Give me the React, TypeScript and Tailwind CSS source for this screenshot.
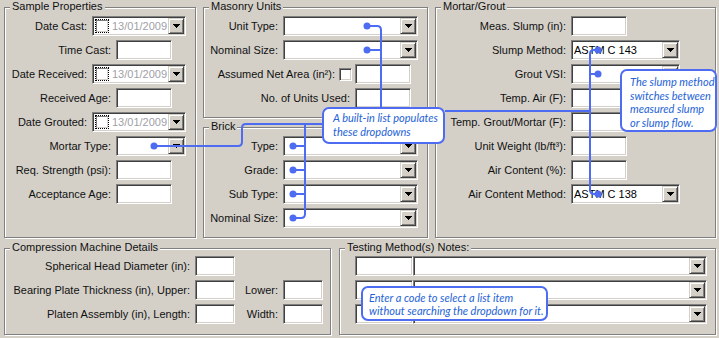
import React from 'react'

const sunken =
  'bg-white border border-t-[#808080] border-l-[#808080] border-r-white border-b-white shadow-[inset_1px_1px_0_#404040,inset_-1px_-1px_0_#d4d0c8]'

function Arrow() {
  return (
    <svg width="7" height="4" viewBox="0 0 7 4" shapeRendering="crispEdges">
      <path d="M0 0h7v1h-1v1h-1v1h-1v1h-1v-1h-1v-1h-1v-1h-1z" fill="#000" />
    </svg>
  )
}

function DropBtn() {
  return (
    <div className="w-4 h-4 shrink-0 flex items-center justify-center bg-[#d4d0c8] border border-t-[#d4d0c8] border-l-[#d4d0c8] border-r-[#404040] border-b-[#404040] shadow-[inset_1px_1px_0_#fff,inset_-1px_-1px_0_#808080]">
      <Arrow />
    </div>
  )
}

function TextBox({ w, disabled }: { w: string; disabled?: boolean }) {
  return <div className={`${sunken} ${w} h-5 shrink-0 ${disabled ? 'bg-[#d4d0c8]' : ''}`} />
}

function Combo({ w, text }: { w: string; text?: string }) {
  return (
    <div className={`${sunken} ${w} h-5 shrink-0 p-px flex items-center`}>
      <span className="flex-1 pl-[1px] text-[11px] text-black whitespace-nowrap">{text}</span>
      <DropBtn />
    </div>
  )
}

function DatePick() {
  return (
    <div className={`${sunken} w-[94px] h-5 shrink-0 p-px flex items-center`}>
      <span className="ml-px w-[14px] h-[14px] border border-dotted border-black flex items-center justify-center">
        <span className="w-[12px] h-[12px] bg-white border border-t-[#808080] border-l-[#808080] border-r-[#d4d0c8] border-b-[#d4d0c8]" />
      </span>
      <span className="ml-[3px] flex-1 text-[#a0a0a8]">13/01/2009</span>
      <DropBtn />
    </div>
  )
}

function Group({ title, className, children }: { title: string; className: string; children?: React.ReactNode }) {
  return (
    <div className={`relative border border-[#808080] shadow-[1px_1px_0_#fff,inset_1px_1px_0_#fff] ${className}`}>
      <span className="absolute -top-2 left-[5px] px-[2px] bg-[#d4d0c8] leading-[13px] whitespace-nowrap">{title}</span>
      {children}
    </div>
  )
}

function Row({ label, lw, children }: { label: string; lw: string; children?: React.ReactNode }) {
  return (
    <div className="flex items-center h-5">
      <span className={`${lw} shrink-0 text-right pr-[5px] whitespace-nowrap`}>{label}</span>
      {children}
    </div>
  )
}

export default function App() {
  const blue = '#4d6cf2'
  return (
    <div className="relative w-[719px] h-[338px] overflow-hidden bg-[#d4d0c8] text-[11px] leading-[13px] text-[#111] font-['Liberation_Sans',Arial,sans-serif]">
      <div className="flex flex-col pt-[7px] pl-[4px]">
        <div className="flex gap-[7px]">
          <Group title="Sample Properties" className="w-[192px] h-[231px] pt-[8px]">
            <div className="flex flex-col gap-1">
              <Row label="Date Cast:" lw="w-[87px]"><DatePick /></Row>
              <Row label="Time Cast:" lw="w-[111px]"><TextBox w="w-[56px]" /></Row>
              <Row label="Date Received:" lw="w-[87px]"><DatePick /></Row>
              <Row label="Received Age:" lw="w-[111px]"><TextBox w="w-[56px]" /></Row>
              <Row label="Date Grouted:" lw="w-[87px]"><DatePick /></Row>
              <Row label="Mortar Type:" lw="w-[111px]"><Combo w="w-[70px]" /></Row>
              <Row label="Req. Strength (psi):" lw="w-[111px]"><TextBox w="w-[56px]" /></Row>
              <Row label="Acceptance Age:" lw="w-[111px]"><TextBox w="w-[56px]" /></Row>
            </div>
          </Group>

          <div className="flex flex-col gap-[9px] w-[225px]">
            <Group title="Masonry Units" className="h-[111px] pt-[8px]">
              <div className="flex flex-col gap-1">
                <Row label="Unit Type:" lw="w-[79px]"><Combo w="w-[135px]" /></Row>
                <Row label="Nominal Size:" lw="w-[79px]"><Combo w="w-[135px]" /></Row>
                <div className="flex items-center h-5">
                  <span className="w-[135px] shrink-0 text-right pr-[4px] whitespace-nowrap">Assumed Net Area (in²):</span>
                  <span className={`${sunken} w-[13px] h-[13px] shrink-0`} />
                  <span className="w-[3px]" />
                  <TextBox w="w-[56px]" disabled />
                </div>
                <Row label="No. of Units Used:" lw="w-[151px]"><TextBox w="w-[56px]" /></Row>
              </div>
            </Group>
            <Group title="Brick" className="h-[111px] pt-[8px]">
              <div className="flex flex-col gap-1">
                <Row label="Type:" lw="w-[79px]"><Combo w="w-[135px]" /></Row>
                <Row label="Grade:" lw="w-[79px]"><Combo w="w-[135px]" /></Row>
                <Row label="Sub Type:" lw="w-[79px]"><Combo w="w-[135px]" /></Row>
                <Row label="Nominal Size:" lw="w-[79px]"><Combo w="w-[135px]" /></Row>
              </div>
            </Group>
          </div>

          <Group title="Mortar/Grout" className="w-[281px] h-[231px] pt-[8px]">
            <div className="flex flex-col gap-1">
              <Row label="Meas. Slump (in):" lw="w-[135px]"><TextBox w="w-[56px]" /></Row>
              <Row label="Slump Method:" lw="w-[135px]"><Combo w="w-[109px]" text="ASTM C 143" /></Row>
              <Row label="Grout VSI:" lw="w-[135px]"><Combo w="w-[109px]" /></Row>
              <Row label="Temp. Air (F):" lw="w-[135px]"><TextBox w="w-[56px]" /></Row>
              <Row label="Temp. Grout/Mortar (F):" lw="w-[135px]"><TextBox w="w-[56px]" /></Row>
              <Row label="Unit Weight (lb/ft³):" lw="w-[135px]"><TextBox w="w-[56px]" /></Row>
              <Row label="Air Content (%):" lw="w-[135px]"><TextBox w="w-[56px]" /></Row>
              <Row label="Air Content Method:" lw="w-[135px]"><Combo w="w-[109px]" text="ASTM C 138" /></Row>
            </div>
          </Group>
        </div>

        <div className="flex gap-[8px] mt-[10px]">
          <Group title="Compression Machine Details" className="w-[327px] h-[87px] pt-[7px]">
            <div className="flex flex-col gap-1">
              <Row label="Spherical Head Diameter (in):" lw="w-[190px]"><TextBox w="w-[40px]" /></Row>
              <Row label="Bearing Plate Thickness (in), Upper:" lw="w-[190px]">
                <TextBox w="w-[40px]" />
                <span className="w-[48px] shrink-0 text-right pr-[5px]">Lower:</span>
                <TextBox w="w-[40px]" />
              </Row>
              <Row label="Platen Assembly (in), Length:" lw="w-[190px]">
                <TextBox w="w-[40px]" />
                <span className="w-[48px] shrink-0 text-right pr-[5px]">Width:</span>
                <TextBox w="w-[40px]" />
              </Row>
            </div>
          </Group>
          <Group title="Testing Method(s) Notes:" className="w-[377px] h-[87px] pt-[7px]">
            <div className="flex flex-col gap-1 pl-[15px]">
              {[0, 1, 2].map(i => (
                <div key={i} className="flex h-5">
                  <TextBox w="w-[58px]" />
                  <Combo w="w-[294px]" />
                </div>
              ))}
            </div>
          </Group>
        </div>
      </div>

      <svg className="absolute inset-0 pointer-events-none" width="719" height="338" viewBox="0 0 719 338">
        <g fill="none" stroke={blue} strokeWidth="2">
          <path d="M367 26H377Q381 26 381 30V107" />
          <path d="M367 50H381" />
          <path d="M154 146H238Q242 146 242 142V128Q242 124 246 124H323" />
          <path d="M305 124V214Q305 218 301 218H293" />
          <path d="M293 146H305M293 170H305M293 194H305" />
          <path d="M598 50H594Q590 50 590 54V190Q590 194 594 194H598" />
          <path d="M590 74H598" />
          <path d="M445 111H590" />
        </g>
        <g fill={blue}>
          {[
            [367, 26], [367, 50], [154, 146], [293, 146], [293, 170], [293, 194], [293, 218],
            [598, 50], [598, 74], [598, 194],
          ].map(([x, y]) => (
            <circle key={`${x}-${y}`} cx={x} cy={y} r="3.5" />
          ))}
        </g>
      </svg>

      <div className="absolute left-[322px] top-[107px] w-[123px] h-[37px] bg-white border-2 border-[#4d6cf2] rounded-[7px] pl-[9px] pt-[2px] italic text-[11px] leading-[14px] text-[#2563d6] font-['Lato',sans-serif] whitespace-nowrap">
        A built-in list populates
        <br />
        these dropdowns
      </div>
      <div className="absolute left-[620px] top-[69px] w-[97px] h-[63px] bg-white border-2 border-[#4d6cf2] rounded-[7px] pl-[8px] pt-[4px] italic text-[11px] leading-[13.5px] text-[#2563d6] font-['Lato',sans-serif] whitespace-nowrap">
        The slump method
        <br />
        switches between
        <br />
        measured slump
        <br />
        or slump flow.
      </div>
      <div className="absolute left-[361px] top-[286px] w-[187px] h-[35px] bg-white border-2 border-[#4d6cf2] rounded-[7px] pl-[6px] pt-[3px] italic text-[11px] leading-[13px] text-[#2563d6] font-['Lato',sans-serif] whitespace-nowrap">
        Enter a code to select a list item
        <br />
        without searching the dropdown for it.
      </div>
    </div>
  )
}
